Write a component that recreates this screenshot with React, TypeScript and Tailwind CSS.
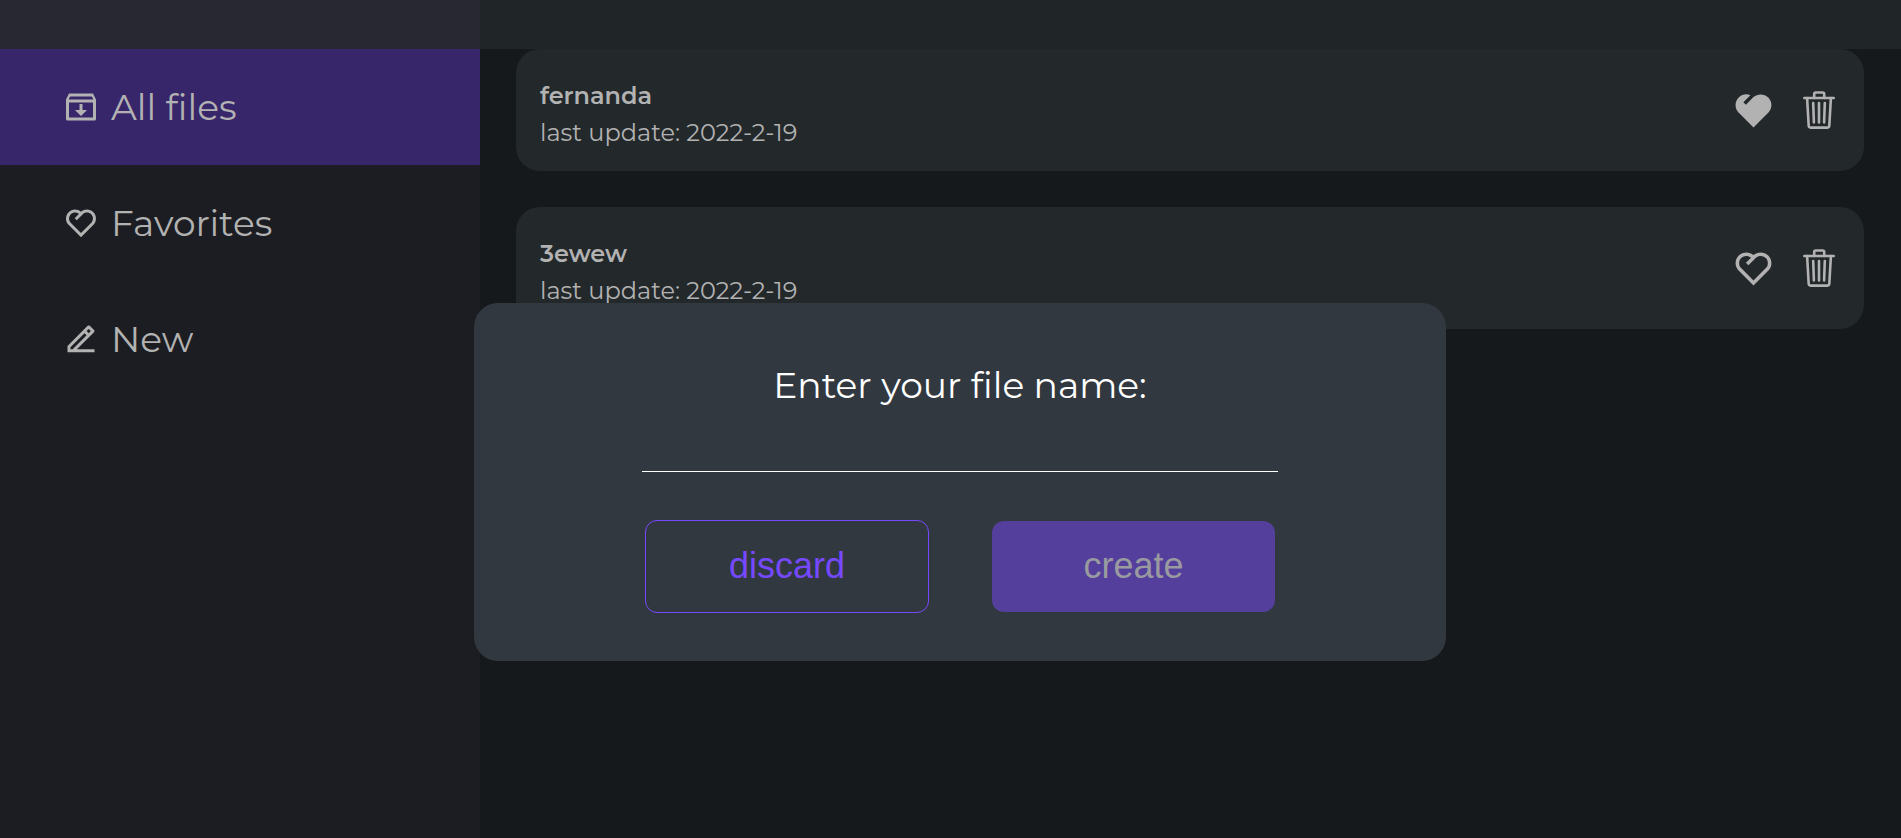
import React, { useState } from "react";
import { RiHeart2Line, RiHeart2Fill, RiEdit2Line } from "react-icons/ri";

function ArchiveIcon({ className }: { className?: string }) {
  return (
    <svg viewBox="0 0 24 24" fill="currentColor" className={className} aria-hidden="true">
      <path d="M20 3l2 4v13a1 1 0 0 1-1 1H3a1 1 0 0 1-1-1V7.004L4 3h16zm0 6H4v10h16V9zm-.764-4H4.764l-.999 2h16.47l-1-2zM13 10v4h3l-4 4-4-4h3v-4h2z" />
    </svg>
  );
}

function TrashIcon({ className }: { className?: string }) {
  return (
    <svg
      viewBox="0 0 32 38"
      fill="none"
      stroke="currentColor"
      strokeWidth="2.6"
      strokeLinecap="round"
      strokeLinejoin="round"
      className={className}
      aria-hidden="true"
    >
      <path d="M1.3 7h29.4" />
      <path d="M11.2 7V3q0-1.5 1.6-1.5h6.8q1.6 0 1.6 1.5V7" />
      <path d="M4.1 7l1.6 27.8q.1 1.8 1.9 1.8h16.8q1.8 0 1.9-1.8L27.9 7" />
      <path d="M10.2 12l.7 19.4M16 12v19.4M21.8 12l-.7 19.4" />
    </svg>
  );
}

const navItems = [
  { label: "All files", Icon: ArchiveIcon, active: true },
  { label: "Favorites", Icon: RiHeart2Line, active: false },
  { label: "New", Icon: RiEdit2Line, active: false },
];

const files = [
  { name: "fernanda", updated: "2022-2-19", favorite: true },
  { name: "3ewew", updated: "2022-2-19", favorite: false },
];

function Sidebar() {
  return (
    <nav className="w-[480px] shrink-0 bg-[#1c1d22]">
      <ul>
        {navItems.map(({ label, Icon, active }) => (
          <li key={label}>
            <a
              href="#"
              className={`flex h-[116px] items-center gap-3 pl-[63px] text-4xl ${active ? "bg-[#38266a]" : ""}`}
            >
              <Icon className="size-9" />
              {label}
            </a>
          </li>
        ))}
      </ul>
    </nav>
  );
}

function FileCard({ name, updated, favorite }: (typeof files)[number]) {
  const Heart = favorite ? RiHeart2Fill : RiHeart2Line;
  return (
    <li className="flex h-[122px] items-center justify-between rounded-3xl bg-[#23282b] pr-[29px] pl-6">
      <div className="pt-2 text-2xl leading-[37px]">
        <h2 className="font-semibold">{name}</h2>
        <p>last update: {updated}</p>
      </div>
      <div className="flex items-center gap-7">
        <button type="button" aria-label="Favorite">
          <Heart className="size-[43px]" />
        </button>
        <button type="button" aria-label="Delete">
          <TrashIcon className="h-[38px] w-8" />
        </button>
      </div>
    </li>
  );
}

function NewFileDialog() {
  const [name, setName] = useState("");
  return (
    <div className="fixed inset-0 flex items-center justify-center pt-[126px] pl-[19px]">
      <form
        role="dialog"
        aria-label="New file"
        className="flex w-[972px] flex-col items-center rounded-3xl bg-[#32383f] px-[168px] pt-[60px] pb-12 text-white"
      >
        <label htmlFor="file-name" className="text-4xl leading-[44px]">
          Enter your file name:
        </label>
        <input
          id="file-name"
          value={name}
          onChange={(e) => setName(e.target.value)}
          className="mt-4 h-[49px] w-full border-b border-white bg-transparent text-center text-4xl outline-none"
        />
        <div className="mt-12 flex w-full items-center justify-between px-[3px] font-['Liberation_Sans',sans-serif] text-4xl">
          <button type="button" className="h-[93px] w-[284px] rounded-xl border border-[#7649fe] pb-0.5 text-[#7649fe]">
            discard
          </button>
          <button type="button" disabled className="h-[91px] w-[283px] rounded-xl bg-[#553f9c] pb-0.5 text-[#999ba0]">
            create
          </button>
        </div>
      </form>
    </div>
  );
}

export default function App() {
  return (
    <div className="flex min-h-screen flex-col bg-[#16191b] font-[Montserrat,Inter,sans-serif] text-[#b2b2b2]">
      <header className="flex h-[49px]">
        <div className="w-[480px] shrink-0 bg-[#272832]" />
        <div className="flex-1 bg-[#202528]" />
      </header>
      <div className="flex flex-1">
        <Sidebar />
        <main className="flex-1 pr-[37px] pl-9">
          <ul className="flex flex-col gap-9">
            {files.map((file) => (
              <FileCard key={file.name} {...file} />
            ))}
          </ul>
        </main>
      </div>
      <NewFileDialog />
    </div>
  );
}
